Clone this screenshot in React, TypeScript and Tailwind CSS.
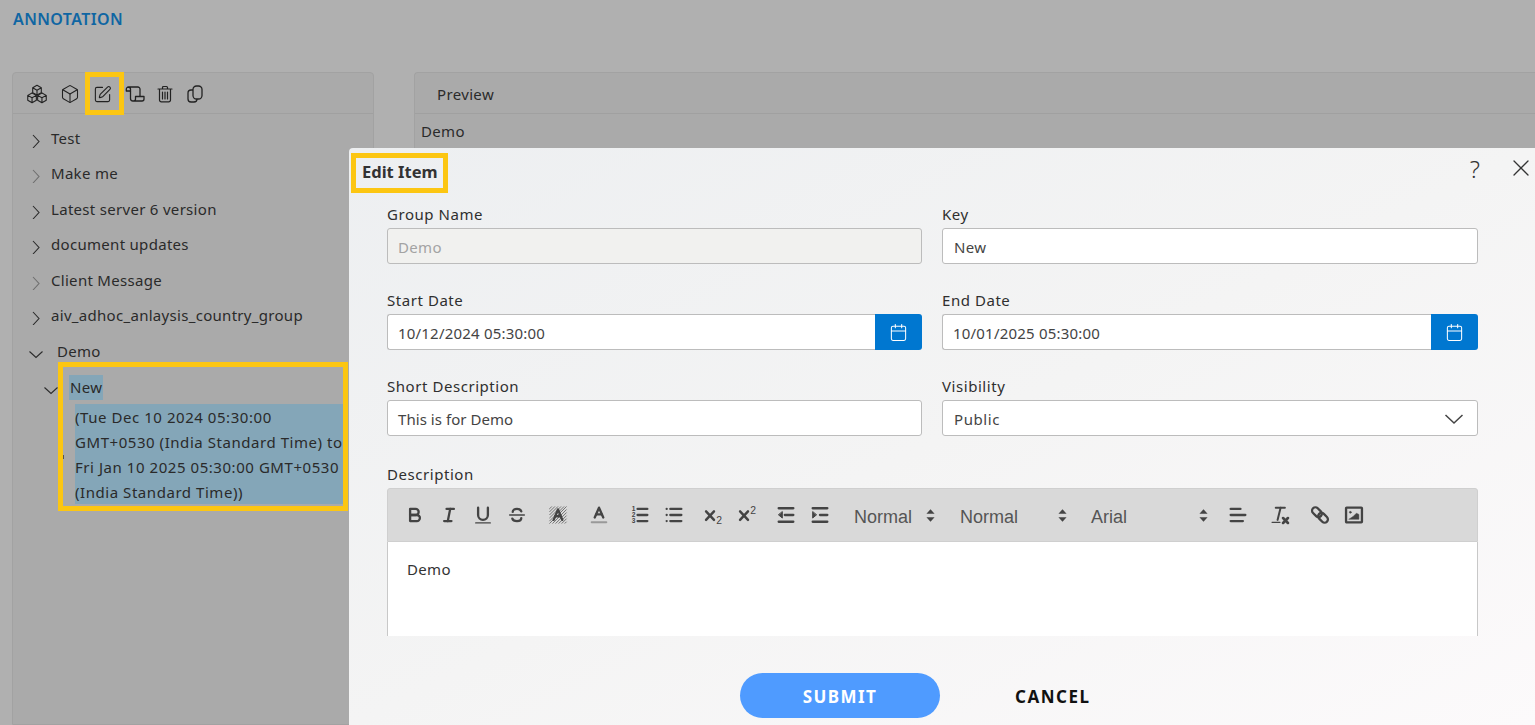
import React from 'react';
import { Box, Calendar, SquarePen, X } from 'lucide-react';

const font = "font-['Noto_Sans',_'Open_Sans',_sans-serif]";

function Chevron({ open, light }: { open?: boolean; light?: boolean }) {
    return (
        <svg width="14" height="14" viewBox="0 0 14 14" fill="none" stroke={light ? '#6f6f6f' : '#2b2b2b'} strokeWidth="1.1">
            {open ? <polyline points="0.5,4.5 7,10.5 13.5,4.5" /> : <polyline points="4,1 10,7.5 4,14" />}
        </svg>
    );
}

function TreeRow({ label, light, open, indent, tall }: { label: string; light?: boolean; open?: boolean; indent?: boolean; tall?: boolean }) {
    return (
        <div className={`${tall ? 'h-[36px]' : 'h-[35px]'} flex items-start pl-[16px]`}>
            <span className="w-[14px] flex justify-center pt-[13px]"><Chevron open={open} light={light} /></span>
            <span className={`${indent ? 'ml-[14px]' : 'ml-[8px]'} pt-[6px] leading-[22px] text-[15px] tracking-[0.3px] text-[#2a2a2a]`}>{label}</span>
        </div>
    );
}

function Field({ label, children }: { label: string; children: React.ReactNode }) {
    return (
        <div className="flex flex-col">
            <label className="h-[26px] text-[15px] leading-[24px] tracking-[0.55px] text-[#2f2f2f]">{label}</label>
            {children}
        </div>
    );
}

const inputBase = 'h-[36px] border border-[#bcbcbc] rounded-[3px] px-[10px] pt-[2px] flex items-center text-[15px]';

function DateField({ label, value }: { label: string; value: string }) {
    return (
        <Field label={label}>
            <div className="flex h-[36px]">
                <div className={`${inputBase} bg-white text-[#444] tracking-[0.2px] flex-1 rounded-r-none border-r-0`}>{value}</div>
                <div className="w-[47px] bg-[#0077d0] rounded-r-[3px] flex items-center justify-center">
                    <Calendar size={19} color="white" strokeWidth={1.3} />
                </div>
            </div>
        </Field>
    );
}

function Tool({ className, children }: { className?: string; children: React.ReactNode }) {
    return (
        <span className={`w-[34px] h-[18px] flex items-center justify-center shrink-0 ${className ?? ''}`}>
            <svg width="22" height="22" viewBox="0 0 18 18" fill="none" stroke="#444" strokeWidth="1.9" strokeLinecap="round" strokeLinejoin="round">
                {children}
            </svg>
        </span>
    );
}

function Picker({ label, className }: { label: string; className: string }) {
    return (
        <span className={`h-[24px] pl-[8px] pr-[4px] flex items-center justify-between shrink-0 text-[18px] text-[#555] font-['Liberation_Sans',_Arial,_sans-serif] ${className}`}>
            <span className="pt-[5px]">{label}</span>
            <svg width="9" height="15" viewBox="0 0 10 16" fill="#444" className="mt-[1px]">
                <polygon points="5,1 9.5,6 0.5,6" />
                <polygon points="5,15 9.5,10 0.5,10" />
            </svg>
        </span>
    );
}

function EditorToolbar() {
    return (
        <div className="h-[54px] bg-[#d9d9d9] border border-[#cfcfcf] rounded-t-[3px] flex items-center pl-[10px] pb-[1px]">
            <Tool>
                <path d="M5,4H9.5A2.5,2.5,0,0,1,12,6.5v0A2.5,2.5,0,0,1,9.5,9H5V4Z" />
                <path d="M5,9h5.5A2.5,2.5,0,0,1,13,11.5v0A2.5,2.5,0,0,1,10.5,14H5V9Z" />
            </Tool>
            <Tool>
                <line x1="7" x2="13" y1="4" y2="4" />
                <line x1="5" x2="11" y1="14" y2="14" />
                <line x1="8" x2="10" y1="14" y2="4" />
            </Tool>
            <Tool>
                <path d="M5,3V9a4,4,0,0,0,8,0V3" />
                <line x1="3" x2="15" y1="15.5" y2="15.5" strokeWidth="1" />
            </Tool>
            <Tool>
                <line x1="3" x2="15" y1="9" y2="9" strokeWidth="1.2" />
                <path d="M12.5,6C12,4.5 10.5,4 9,4C7,4 5.5,5 5.5,6.5M12.5,11.5C12.5,13 11,14 9,14C7,14 5.6,13.3 5.2,12" />
            </Tool>
            <Tool className="ml-[7px]">
                <g strokeWidth="0.65" stroke="#5a5a5a" strokeLinecap="butt">
                    <line x1="2" y1="4" x2="4" y2="2" /><line x1="2" y1="6.5" x2="6.5" y2="2" /><line x1="2" y1="9" x2="9" y2="2" />
                    <line x1="2" y1="11.5" x2="11.5" y2="2" /><line x1="2" y1="14" x2="14" y2="2" /><line x1="2" y1="16" x2="16" y2="2" />
                    <line x1="4.5" y1="16" x2="16" y2="4.5" /><line x1="7" y1="16" x2="16" y2="7" /><line x1="9.5" y1="16" x2="16" y2="9.5" />
                    <line x1="12" y1="16" x2="16" y2="12" /><line x1="14.5" y1="16" x2="16" y2="14.5" />
                </g>
                <polyline points="5.5,13 9,4.5 12.5,13" />
                <line x1="6.8" x2="11.2" y1="10" y2="10" />
            </Tool>
            <Tool className="ml-[7px]">
                <polyline points="5.5,11 9,3 12.5,11" />
                <line x1="6.8" x2="11.2" y1="8.5" y2="8.5" />
                <line x1="3" x2="15" y1="15" y2="15" stroke="#999" strokeWidth="1.6" />
            </Tool>
            <Tool className="ml-[7px]">
                <line x1="7" x2="15" y1="4" y2="4" />
                <line x1="7" x2="15" y1="9" y2="9" />
                <line x1="7" x2="15" y1="14" y2="14" />
                <g fill="#444" stroke="none" fontSize="5.4" fontWeight="700" fontFamily="Liberation Sans">
                    <text x="2.2" y="5.9">1</text><text x="2.2" y="10.9">2</text><text x="2.2" y="15.9">3</text>
                </g>
            </Tool>
            <Tool>
                <line x1="6" x2="15" y1="4" y2="4" />
                <line x1="6" x2="15" y1="9" y2="9" />
                <line x1="6" x2="15" y1="14" y2="14" />
                <line x1="3" x2="3" y1="4" y2="4" />
                <line x1="3" x2="3" y1="9" y2="9" />
                <line x1="3" x2="3" y1="14" y2="14" />
            </Tool>
            <Tool className="ml-[6px]">
                <line x1="2.5" y1="6" x2="9" y2="13" strokeWidth="2" />
                <line x1="9" y1="6" x2="2.5" y2="13" strokeWidth="2" />
                <text x="10.8" y="16.5" fontSize="8.5" fill="#444" stroke="none" fontFamily="Liberation Sans">2</text>
            </Tool>
            <Tool>
                <line x1="2.5" y1="6" x2="9" y2="13" strokeWidth="2" />
                <line x1="9" y1="6" x2="2.5" y2="13" strokeWidth="2" />
                <text x="10.8" y="8" fontSize="8.5" fill="#444" stroke="none" fontFamily="Liberation Sans">2</text>
            </Tool>
            <Tool className="ml-[4px]">
                <line x1="3" x2="15" y1="3.5" y2="3.5" />
                <line x1="3" x2="15" y1="14.5" y2="14.5" />
                <line x1="8" x2="15" y1="9" y2="9" />
                <polygon points="6,6.5 6,11.5 3,9" fill="#444" strokeWidth="0.8" />
            </Tool>
            <Tool>
                <line x1="3" x2="15" y1="3.5" y2="3.5" />
                <line x1="3" x2="15" y1="14.5" y2="14.5" />
                <line x1="9" x2="15" y1="9" y2="9" />
                <polygon points="3,6.5 3,11.5 6,9" fill="#444" strokeWidth="0.8" />
            </Tool>
            <Picker label="Normal" className="w-[93px] ml-[9px]" />
            <Picker label="Normal" className="w-[119px] ml-[13px]" />
            <Picker label="Arial" className="w-[129px] ml-[12px]" />
            <Tool className="ml-[9px]">
                <line x1="3" x2="11" y1="4" y2="4" />
                <line x1="3" x2="15" y1="9" y2="9" />
                <line x1="3" x2="13" y1="14" y2="14" />
            </Tool>
            <Tool className="ml-[8px]">
                <line x1="5.5" x2="13" y1="3" y2="3" strokeWidth="1.6" />
                <line x1="9.5" x2="7" y1="3" y2="13" strokeWidth="1.6" />
                <line x1="2.5" x2="9" y1="15" y2="15" strokeWidth="1" />
                <line x1="11.5" x2="15.5" y1="11.5" y2="15.5" strokeWidth="2.2" />
                <line x1="15.5" x2="11.5" y1="11.5" y2="15.5" strokeWidth="2.2" />
            </Tool>
            <Tool className="ml-[6px]">
                <rect x="2" y="4" width="9" height="5.4" rx="2.7" transform="rotate(45 6.5 6.7)" />
                <rect x="7" y="8.6" width="9" height="5.4" rx="2.7" transform="rotate(45 11.5 11.3)" />
            </Tool>
            <Tool>
                <rect x="2.5" y="3" width="13" height="12" rx="0.5" />
                <circle cx="6" cy="6.8" r="0.8" fill="#444" strokeWidth="0.4" />
                <polygon points="5,12.5 13,12.5 13,8.5 11,7.5 8.5,10" fill="#444" strokeWidth="0.4" />
            </Tool>
        </div>
    );
}

function Cube({ x, y, r }: { x: number; y: number; r: number }) {
    const w = r * 0.87;
    return (
        <path d={`M${x} ${y - r}L${x + w} ${y - r / 2}V${y + r / 2}L${x} ${y + r}L${x - w} ${y + r / 2}V${y - r / 2}ZM${x - w} ${y - r / 2}L${x} ${y}L${x + w} ${y - r / 2}M${x} ${y}V${y + r}`} />
    );
}

export default function App() {
    return (
        <div className={`relative w-[1535px] h-[725px] overflow-hidden bg-[#b0b0b0] ${font}`}>
            {/* Page behind the dialog */}
            <h1 className="pl-[13px] pt-[9px] h-[72px] text-[16px] leading-[20px] font-semibold tracking-[0.4px] text-[#0f66a3]">ANNOTATION</h1>
            <div className="flex pl-[12px] gap-[40px] h-[653px]">
                <div className="w-[362px] h-full border border-[#a2a2a2] rounded-t-[4px] bg-[#aaaaaa]">
                    <div className="h-[41px] border-b border-[#a0a0a0] flex items-center gap-[11px] pl-[13px] pt-[2px] text-[#222]">
                        <svg width="22" height="22" viewBox="0 0 20 20" fill="none" stroke="#222" strokeWidth="1" strokeLinejoin="round">
                            <Cube x={10} y={6.5} r={4.5} />
                            <Cube x={5.5} y={13.5} r={4.5} />
                            <Cube x={14.5} y={13.5} r={4.5} />
                        </svg>
                        <span className="ml-[1px]"><Box size={20} strokeWidth={1.3} /></span>
                        <span className="ml-[2px]"><SquarePen size={19} strokeWidth={1.4} /></span>
                        <svg width="20" height="20" viewBox="0 0 20 20" fill="none" stroke="#222" strokeWidth="1.3" strokeLinejoin="round" className="ml-[2px]">
                            <path d="M3.5 3a2.2 2.2 0 0 0-2.2 2.2V7h4.2V5.2A2.2 2.2 0 0 0 3.5 3h9.3a2.2 2.2 0 0 1 2.2 2.2V12" />
                            <path d="M5.5 7v7.5a2.5 2.5 0 0 0 2.5 2.5h9a2 2 0 0 0 2-2V12.500H10.500v2.500a2 2 0 0 1-2 2" />
                        </svg>
                        <svg width="20" height="20" viewBox="0 0 20 20" fill="none" stroke="#222" strokeWidth="1.2" strokeLinecap="round" className="-ml-[1px]">
                            <path d="M3 5h14M7.5 5V3.5a1 1 0 0 1 1-1h3a1 1 0 0 1 1 1V5M4.5 5v11a1.800 1.800 0 0 0 1.800 1.800h7.400a1.800 1.800 0 0 0 1.800-1.800V5M7.500 8v7M10 8v7M12.500 8v7" />
                        </svg>
                        <svg width="20" height="20" viewBox="0 0 20 20" fill="none" stroke="#222" strokeWidth="1.3" className="-ml-[1px]">
                            <rect x="8" y="2" width="9" height="13" rx="3.5" />
                            <path d="M8 6H6a3 3 0 0 0-3 3v6a3 3 0 0 0 3 3h3a3 3 0 0 0 3-3" />
                        </svg>
                    </div>
                    <div className="pt-[7px]">
                        <TreeRow label="Test" />
                        <TreeRow label="Make me" light tall />
                        <TreeRow label="Latest server 6 version" />
                        <TreeRow label="document updates" tall />
                        <TreeRow label="Client Message" light />
                        <TreeRow label="aiv_adhoc_anlaysis_country_group" tall />
                        <TreeRow label="Demo" open indent />
                        <div className="h-[35.5px] mt-[0.5px] flex items-center pl-[31px]">
                            <span className="pt-[5px] flex"><Chevron open /></span>
                            <span className="ml-[11px] px-[1px] h-[25px] leading-[25px] bg-[#84a6b8] text-[15px] tracking-[0.3px] text-[#2a2a2a]">New</span>
                        </div>
                        <div className="ml-[62px] -mt-[1px] w-[268px] h-[100px] pt-[1px] bg-[#84a6b8] text-[15px] leading-[25px] tracking-[0.55px] text-[#2a2a2a] whitespace-nowrap">
                            <div>(Tue Dec 10 2024 05:30:00</div>
                            <div>GMT+0530 (India Standard Time) to</div>
                            <div>Fri Jan 10 2025 05:30:00 GMT+0530</div>
                            <div>(India Standard Time))</div>
                        </div>
                    </div>
                </div>
                <div className="flex-1 h-full border border-[#a2a2a2] border-r-0 rounded-tl-[4px] bg-[#aaaaaa]">
                    <div className="h-[41px] border-b border-[#a0a0a0] pl-[22px] pt-[2px] flex items-center text-[15px] tracking-[0.35px] text-[#2a2a2a]">Preview</div>
                    <div className="pl-[6px] pt-[6px] text-[15px] tracking-[0.35px] text-[#2a2a2a]">Demo</div>
                </div>
            </div>

            {/* Edit dialog */}
            <div className="absolute left-[349px] top-[148px] w-[1186px] h-[577px] flex flex-col bg-gradient-to-br from-[#edeff1] via-[#f4f4f4] to-[#fcfafb] rounded-tl-[4px]">
                <div className="h-[54px] shrink-0 flex justify-between pl-[13px] pt-[11px]">
                    <h2 className="text-[16.5px] leading-[26px] font-bold text-[#333]">Edit Item</h2>
                    <div className="flex items-start gap-[27px] text-[#333]">
                        <span className="text-[24px] leading-[20px] font-light">?</span>
                        <X size={28} strokeWidth={1.1} className="-mt-[5px]" />
                    </div>
                </div>
                <div className="h-[434px] overflow-hidden pl-[38px] pr-[57px]">
                    <div className="grid grid-cols-[535px_536px] gap-x-[20px] gap-y-[24px]">
                        <Field label="Group Name">
                            <div className={`${inputBase} bg-[#f1f1ef] text-[#a3a3a3] tracking-[0.35px]`}>Demo</div>
                        </Field>
                        <Field label="Key">
                            <div className={`${inputBase} bg-white text-[#444] tracking-[0.35px]`}><span className="ml-[1px]">New</span></div>
                        </Field>
                        <DateField label="Start Date" value="10/12/2024 05:30:00" />
                        <DateField label="End Date" value="10/01/2025 05:30:00" />
                        <Field label="Short Description">
                            <div className={`${inputBase} bg-white text-[#444] tracking-[0.05px]`}>This is for Demo</div>
                        </Field>
                        <Field label="Visibility">
                            <div className={`${inputBase} bg-white text-[#444] tracking-[0.6px] justify-between pr-[13px]`}>
                                <span className="ml-[1px]">Public</span>
                                <svg width="20" height="12" viewBox="0 0 20 12" fill="none" stroke="#444" strokeWidth="1.5">
                                    <polyline points="1.5,2 10,10 18.5,2" />
                                </svg>
                            </div>
                        </Field>
                    </div>
                    <div className="mt-[25px] h-[27px] text-[15px] leading-[26px] tracking-[0.55px] text-[#2f2f2f]">Description</div>
                    <EditorToolbar />
                    <div className="h-[160px] bg-white border-x border-[#c8c8c8] px-[19px] pt-[16px] text-[15px] tracking-[0.35px] text-[#333]">Demo</div>
                </div>
                <div className="flex-1 flex items-start pt-[37px] pl-[391px]">
                    <button type="button" className="w-[200px] h-[45px] pt-[2px] rounded-full bg-[#4f9bff] text-white text-[17px] font-bold tracking-[1.4px]">SUBMIT</button>
                    <button type="button" className="ml-[75px] h-[45px] pt-[2px] text-[#111] text-[17px] font-bold tracking-[1.5px]">CANCEL</button>
                </div>
            </div>

            {/* Yellow callouts drawn over the screenshot */}
            <div className="absolute left-[85px] top-[72px] w-[39px] h-[43px] border-[5px] border-[#fcc612]" />
            <div className="absolute left-[58px] top-[362px] w-[290px] h-[149px] border-[5px] border-[#fcc612]" />
            <div className="absolute left-[351px] top-[153px] w-[97px] h-[40px] border-[5px] border-[#fcc612]" />
            <div className="absolute left-[63px] top-[455px] w-px h-[4px] bg-[#555]" />
        </div>
    );
}
